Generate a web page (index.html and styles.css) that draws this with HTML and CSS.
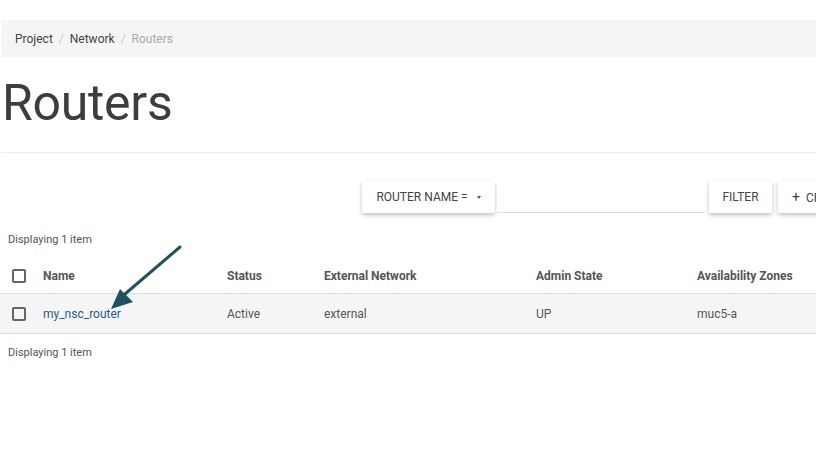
FILE: index.html
```html
<!DOCTYPE html>
<html lang="en">
<head>
  <meta charset="UTF-8" />
  <title>Routers</title>
  <link rel="stylesheet" href="styles.css">
</head>
<body>

<div class="page">
  <!-- Breadcrumb -->
  <ol class="breadcrumb">
    <li><a href="#">Project</a></li>
    <li><a href="#">Network</a></li>
    <li class="active">Routers</li>
  </ol>

  <div class="page-header">
    <h1>Routers</h1>
  </div>

  <!-- Toolbar -->
  <div class="table-actions">
    <button class="btn btn-dropdown">ROUTER NAME = <span class="caret"></span></button>
    <input type="text" class="filter-input" />
    <button class="btn btn-filter">FILTER</button>
    <button class="btn btn-create"><span class="plus">+</span> CREATE ROUTER</button>
  </div>

  <p class="count">Displaying 1 item</p>

  <div class="table-wrap">
    <table class="routers">
      <colgroup>
        <col class="c-check">
        <col class="c-name">
        <col class="c-status">
        <col class="c-ext">
        <col class="c-admin">
        <col class="c-az">
      </colgroup>
      <thead>
        <tr>
          <th><span class="checkbox"></span></th>
          <th>Name</th>
          <th>Status</th>
          <th>External Network</th>
          <th>Admin State</th>
          <th>Availability Zones</th>
        </tr>
      </thead>
      <tbody>
        <tr>
          <td><span class="checkbox"></span></td>
          <td><a href="#">my_nsc_router</a></td>
          <td>Active</td>
          <td>external</td>
          <td>UP</td>
          <td>muc5-a</td>
        </tr>
      </tbody>
    </table>

    <!-- annotation arrow -->
    <svg class="arrow" width="90" height="75" viewBox="0 0 90 75">
      <line x1="80" y1="8" x2="25" y2="55" stroke="#21505e" stroke-width="3" stroke-linecap="round" />
      <polygon points="11,70 20,50 33,63" fill="#21505e" />
    </svg>
  </div>

  <p class="count count-bottom">Displaying 1 item</p>
</div>

</body>
</html>
```

FILE: styles.css
```css
body {
  margin: 0;
  padding: 0;
  background-color: #fff;
  font-family: Roboto, "Liberation Sans", Arial, sans-serif;
  color: #555;
}
.page {
  padding-top: 20px;
  overflow: hidden;
}
.breadcrumb {
  list-style: none;
  margin: 0 0 0 1px;
  padding: 0 14px;
  height: 37px;
  display: flex;
  align-items: center;
  background-color: #f5f5f5;
  font-size: 12px;
}
.breadcrumb li + li::before {
  content: "/";
  color: #ccc;
  padding: 0 6px;
}
.breadcrumb a {
  color: #444;
  text-decoration: none;
}
.breadcrumb .active {
  color: #aaa;
}

.page-header {
  margin-left: 1px;
  border-bottom: 1px solid #eee;
  height: 95px;
}
.page-header h1 {
  margin: 0;
  padding: 17px 0 0 1px;
  font-size: 50px;
  font-weight: 400;
  color: #3d3d3d;
  letter-spacing: -0.3px;
}

.table-actions {
  display: flex;
  align-items: flex-end;
  margin: 28px 0 0 362px;
  height: 32px;
}
.btn {
  flex-shrink: 0;
  height: 32px;
  padding: 0 14px;
  border: none;
  border-radius: 2px;
  background-color: #fff;
  color: #444;
  font-family: inherit;
  font-size: 12px;
  white-space: nowrap;
  box-shadow: 0 2px 4px rgba(0, 0, 0, 0.25);
  margin-right: 6px;
}
.btn-dropdown {
  width: 133px;
  margin-right: 2px;
}
.caret {
  display: inline-block;
  width: 0;
  height: 0;
  margin-left: 6px;
  vertical-align: middle;
  border-top: 3px solid #555;
  border-left: 2.5px solid transparent;
  border-right: 2.5px solid transparent;
}
.plus {
  font-size: 14px;
  margin-right: 3px;
}
.filter-input {
  flex-shrink: 0;
  width: 208px;
  height: 31px;
  border: none;
  border-bottom: 1px solid #ddd;
  margin-right: 4px;
  padding: 0;
  outline: none;
}
.btn-filter {
  width: 63px;
  padding: 0;
}
.btn-create {
  width: 130px;
  text-align: left;
  padding-left: 14px;
}

.count {
  margin: 17px 0 0 0;
  padding: 0 8px;
  font-size: 11px;
  color: #555;
  height: 20px;
  line-height: 20px;
}

.table-wrap {
  position: relative;
  margin-top: 9px;
}
.routers {
  width: 900px;
  table-layout: fixed;
  border-collapse: collapse;
  font-size: 12px;
}
.c-check { width: 35px; }
.c-name { width: 184px; }
.c-status { width: 97px; }
.c-ext { width: 212px; }
.c-admin { width: 161px; }
.c-az { width: 211px; }
.routers th,
.routers td {
  text-align: left;
  padding: 0 8px;
  vertical-align: middle;
}
.routers th:first-child,
.routers td:first-child {
  padding-left: 12px;
}
.routers th {
  height: 34px;
  font-weight: bold;
  color: #555;
  border-bottom: 1px solid #ddd;
}
.routers td {
  height: 39px;
  background-color: #f5f5f5;
  color: #555;
  border-bottom: 1px solid #ddd;
}
.routers a {
  color: #1e5a8c;
  text-decoration: none;
}
.checkbox {
  display: block;
  width: 10px;
  height: 10px;
  border: 2px solid #666;
  border-radius: 2px;
}
.arrow {
  position: absolute;
  left: 100px;
  top: -20px;
}
.count-bottom {
  margin-top: 9px;
}
```
